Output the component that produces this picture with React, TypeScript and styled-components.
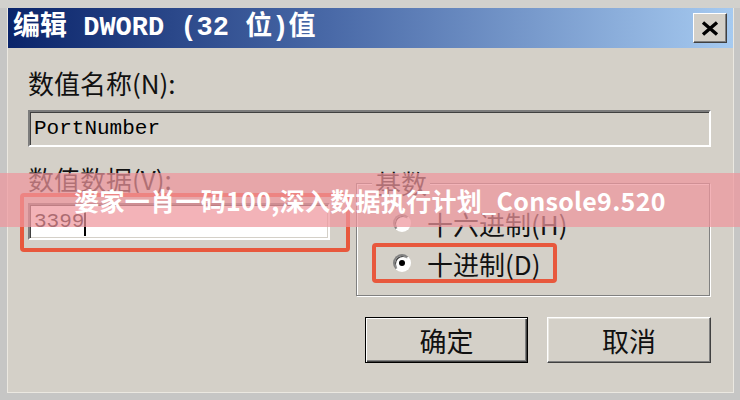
import React from "react";
import styled, { createGlobalStyle } from "styled-components";

const GlobalStyle = createGlobalStyle`
  html, body { margin: 0; padding: 0; }
  body {
    width: 740px;
    height: 400px;
    overflow: hidden;
    background: #c8c8c6;
    font-family: "Noto Sans CJK SC", sans-serif;
  }
`;

const Stage = styled.div`
  position: relative;
  width: 740px;
  height: 400px;
  box-sizing: border-box;
  padding: 8px 0 0 7px;
  background: linear-gradient(#d2d1cd 0, #d2d1cd 8px, #c6c6c5 8px);
`;

const Window = styled.div`
  width: 727px;
  height: 385px;
  box-sizing: border-box;
  background: #d4d0c8;
  border: 1px solid #ebe8e1;
  border-top: none;
  display: flex;
  flex-direction: column;
`;

const TitleBar = styled.div`
  height: 40px;
  display: flex;
  align-items: center;
  justify-content: space-between;
  padding: 0 6px 0 5px;
  background: linear-gradient(90deg, #0a246a 0%, #4a6aa8 45%, #a6caf0 100%);
`;

const TitleText = styled.span`
  color: #fff;
  font-family: "Liberation Mono", "Noto Sans CJK SC", monospace;
  font-weight: 700;
  font-size: 27px;
  line-height: 30px;
  white-space: pre;
`;

const CloseButton = styled.div`
  width: 34px;
  height: 30px;
  box-sizing: border-box;
  background: #d4d0c8;
  border: 1px solid;
  border-color: #fff #404040 #404040 #fff;
  box-shadow: inset -1px -1px #808080;
  display: flex;
  align-items: center;
  justify-content: center;
`;

const Body = styled.div`
  display: flex;
  flex-direction: column;
  padding: 20px 22px 0 20px;
`;

const Label = styled.div`
  font-size: 26px;
  line-height: 30px;
  height: 30px;
  color: #111;
  white-space: pre;
`;

const Field = styled.div<{ $bg: string; $top?: number }>`
  height: 37px;
  box-sizing: border-box;
  margin-top: ${(p) => p.$top ?? 0}px;
  background: ${(p) => p.$bg};
  border: 2px solid;
  border-color: #7c7c7c #fff #fff #7c7c7c;
  box-shadow: inset 1px 1px #404040, inset -1px -1px #d4d0c8;
  display: flex;
  align-items: center;
  padding-left: 4px;
  font-family: "Liberation Mono", monospace;
  font-size: 21px;
  color: #000;
`;

const Caret = styled.span`
  display: inline-block;
  width: 2px;
  height: 28px;
  background: #000;
`;

const Row = styled.div`
  display: flex;
  margin-top: 17px;
`;

const LeftColumn = styled.div`
  width: 322px;
  display: flex;
  flex-direction: column;
`;

const Highlight = styled.div`
  margin: -1px 0 0 -8px;
  width: 330px;
  box-sizing: border-box;
  border: 4px solid #e8583d;
  border-radius: 4px;
  padding: 6px 16px 8px 4px;
`;

const Group = styled.div`
  flex: 1;
  margin: 19px 1px 0 6px;
  border: 1px solid #808080;
  box-shadow: inset 1px 1px #fff, 1px 1px #fff;
  display: flex;
  flex-direction: column;
  padding: 0 0 12px 15px;
`;

const Legend = styled.span`
  align-self: flex-start;
  margin: -14px 0 0 0;
  padding: 0 3px;
  background: #d4d0c8;
  font-size: 26px;
  line-height: 26px;
  color: #111;
`;

const RadioList = styled.div`
  margin-top: 7px;
  display: flex;
  flex-direction: column;
`;

const RadioRow = styled.div<{ $marked?: boolean }>`
  align-self: flex-start;
  height: 40px;
  box-sizing: border-box;
  display: flex;
  align-items: center;
  gap: 16px;
  padding: 0 13px 0 17px;
  border: 4px solid ${(p) => (p.$marked ? "#e8583d" : "transparent")};
  border-radius: 4px;
  font-size: 26px;
  color: #111;
  white-space: pre;
`;

const Radio = styled.span<{ $checked?: boolean }>`
  width: 18px;
  height: 18px;
  box-sizing: border-box;
  border-radius: 50%;
  border: 2px solid;
  border-color: #808080 #fff #fff #808080;
  background: #fff;
  box-shadow: inset 1px 1px #404040;
  display: flex;
  align-items: center;
  justify-content: center;
  &::after {
    content: "";
    width: 6px;
    height: 6px;
    border-radius: 50%;
    background: ${(p) => (p.$checked ? "#000" : "transparent")};
  }
`;

const ButtonRow = styled.div`
  display: flex;
  justify-content: flex-end;
  gap: 19px;
  margin-top: 21px;
`;

const Button = styled.div<{ $default?: boolean; $w: number }>`
  width: ${(p) => p.$w}px;
  height: 46px;
  box-sizing: border-box;
  background: #d4d0c8;
  border: 1px solid;
  border-color: ${(p) => (p.$default ? "#000" : "#fff #404040 #404040 #fff")};
  box-shadow: ${(p) =>
    p.$default
      ? "inset 1px 1px #fff, inset -1px -1px #404040, inset -2px -2px #808080"
      : "inset -1px -1px #808080, inset 1px 1px #e8e6e0"};
  display: flex;
  align-items: center;
  justify-content: center;
  font-size: 27px;
  color: #111;
`;

const Banner = styled.div`
  position: absolute;
  left: 0;
  top: 173px;
  width: 740px;
  height: 54px;
  background: rgba(238, 150, 156, 0.72);
  display: flex;
  align-items: center;
  justify-content: center;
  color: #fff;
  font-family: "Noto Sans CJK SC", sans-serif;
  font-weight: 700;
  font-size: 25px;
  letter-spacing: 0.3px;
`;

export default function App() {
  return (
    <>
      <GlobalStyle />
      <Stage>
        <Window>
          <TitleBar>
            <TitleText>编辑 DWORD (32 位)值</TitleText>
            <CloseButton>
              <svg width="18" height="15" viewBox="0 0 18 15">
                <path d="M2 1.5 L16 13.5 M16 1.5 L2 13.5" stroke="#000" strokeWidth="3.4" />
              </svg>
            </CloseButton>
          </TitleBar>
          <Body>
            <Label>数值名称(N):</Label>
            <Field $bg="#d4d0c8" $top={12}>
              PortNumber
            </Field>
            <Row>
              <LeftColumn>
                <Label>数值数据(V):</Label>
                <Highlight>
                  <Field $bg="#fff">
                    3399
                    <Caret />
                  </Field>
                </Highlight>
              </LeftColumn>
              <Group>
                <Legend>基数</Legend>
                <RadioList>
                  <RadioRow>
                    <Radio />
                    十六进制(H)
                  </RadioRow>
                  <RadioRow $marked>
                    <Radio $checked />
                    十进制(D)
                  </RadioRow>
                </RadioList>
              </Group>
            </Row>
            <ButtonRow>
              <Button $default $w={163}>确定</Button>
              <Button $w={164}>取消</Button>
            </ButtonRow>
          </Body>
        </Window>
        <Banner>婆家一肖一码100,深入数据执行计划_Console9.520</Banner>
      </Stage>
    </>
  );
}
